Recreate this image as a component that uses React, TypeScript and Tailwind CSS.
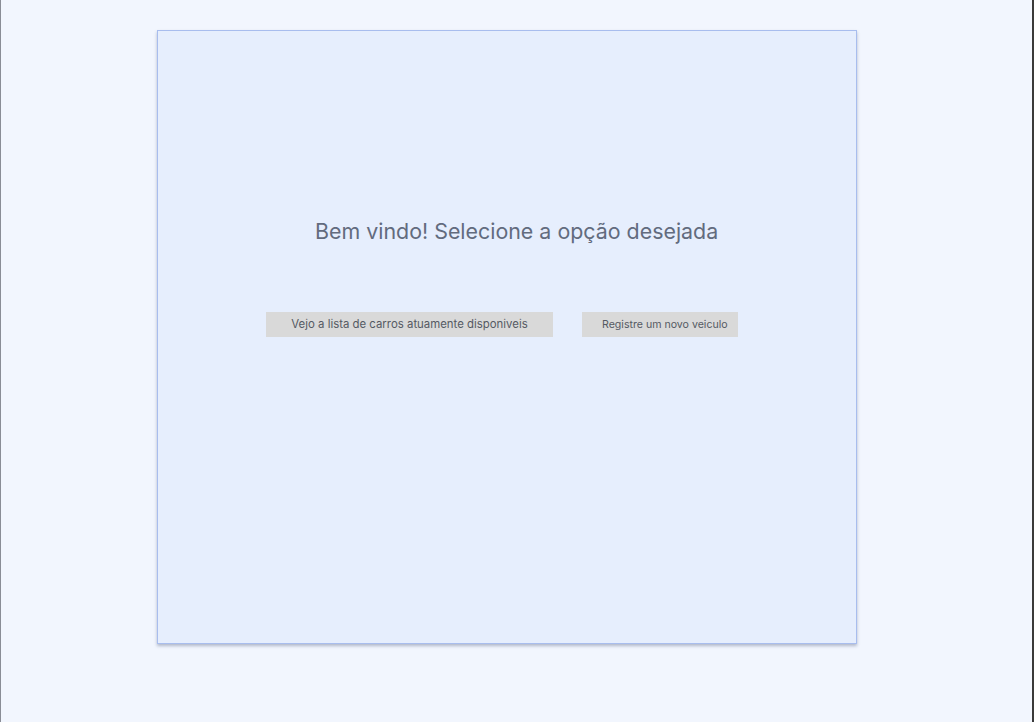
export default function App() {
  return (
    <div
      className="w-[1034px] h-[722px] bg-[#f2f6fe] border-l border-l-[#8a8d96] border-r-2 border-r-[#3a3a3a] flex flex-col"
      style={{ fontFamily: "Inter, 'Noto Sans', sans-serif" }}
    >
      <div className="ml-[156px] mt-[30px] w-[700px] h-[614px] bg-[#e6eefd] border border-[#a8bdee] shadow-[0_2px_3px_rgba(100,110,140,0.45)] flex flex-col">
        <div className="pt-[188px] pl-[157px] text-[21.4px] leading-[24px] text-[#626b7e] whitespace-nowrap">
          Bem vindo! Selecione a opção desejada
        </div>
        <div className="mt-[69px] pl-[108px] flex gap-[29px]">
          <button className="w-[287px] h-[25px] bg-[#d9d9d9] text-[11.4px] text-[#555a63] flex items-center justify-center whitespace-nowrap">
            Vejo a lista de carros atuamente disponiveis
          </button>
          <button className="w-[156px] h-[25px] bg-[#d9d9d9] text-[10.6px] text-[#555a63] flex items-center pl-[20px] whitespace-nowrap">
            Registre um novo veiculo
          </button>
        </div>
      </div>
    </div>
  );
}
